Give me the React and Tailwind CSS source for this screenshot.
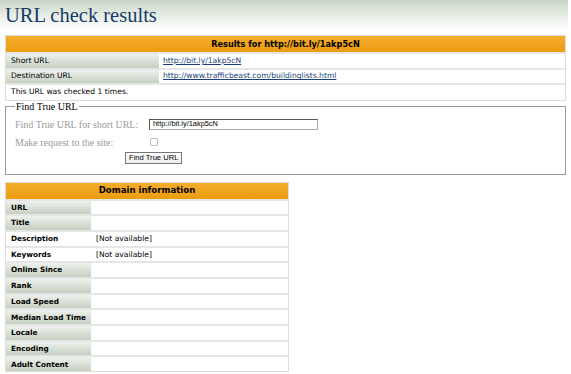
import React from "react";

const sans = { fontFamily: '"DejaVu Sans", Verdana, sans-serif' };
const serif = { fontFamily: '"Liberation Serif", Georgia, serif' };
const arial = { fontFamily: '"Liberation Sans", Arial, sans-serif' };

const labelBg = "bg-gradient-to-b from-[#eef1ec] to-[#c6d0c2]";
const orange = "bg-gradient-to-b from-[#f4ad2c] to-[#ec9c0c]";

function DomainRow({ label, value, plain }) {
  return (
    <div className="flex h-[15.7px] border-t-2 border-[#e6e6e6]">
      <div className={`w-[85px] shrink-0 pl-[5px] flex items-center font-bold text-[7.3px] ${plain ? "bg-white" : labelBg}`}>{label}</div>
      <div className="flex-1 pl-[5px] flex items-center bg-white">{value}</div>
    </div>
  );
}

export default function App() {
  const rows = [
    ["URL"], ["Title"], ["Description", "[Not available]", true], ["Keywords", "[Not available]", true],
    ["Online Since"], ["Rank"], ["Load Speed"], ["Median Load Time"], ["Locale"], ["Encoding"], ["Adult Content"],
  ];
  return (
    <div className="w-[571px] h-[374px] bg-white overflow-hidden text-black">
      <div className="h-[30px] w-[568px] bg-gradient-to-b from-[#c8d5c5] via-[#e6ede4] to-white pl-[5px] pt-[2px]">
        <div className="text-[20.5px] leading-[26px] text-[#173a6b]" style={serif}>URL check results</div>
      </div>

      <div className="px-[5px] pt-[5px]" style={sans}>
        <div className="w-[561px] border border-[#dcdcdc] text-[7.6px] leading-none">
          <div className={`h-[16px] flex items-center justify-center font-bold text-[8.2px] ${orange}`}>Results for http://bit.ly/1akp5cN</div>
          <div className="flex h-[15.5px] border-t-2 border-[#e6e6e6]">
            <div className={`w-[153px] shrink-0 pl-[5px] flex items-center ${labelBg}`}>Short URL</div>
            <div className="flex-1 pl-[4px] flex items-center"><a className="underline text-[#1a3f7a]" href="#">http://bit.ly/1akp5cN</a></div>
          </div>
          <div className="flex h-[15.5px] border-t-2 border-[#e6e6e6]">
            <div className={`w-[153px] shrink-0 pl-[5px] flex items-center ${labelBg}`}>Destination URL</div>
            <div className="flex-1 pl-[4px] flex items-center"><a className="underline text-[#1a3f7a]" href="#">http://www.trafficbeast.com/buildinglists.html</a></div>
          </div>
          <div className="h-[16.5px] border-t-2 border-[#e6e6e6] pl-[5px] flex items-center">This URL was checked 1 times.</div>
        </div>

        <fieldset className="mt-[1px] w-[561px] h-[73px] border border-[#9a9a9a] pl-[9px] pr-2 pt-0" style={serif}>
          <legend className="text-[10px] leading-[10px] px-[1px]">Find True URL</legend>
          <div className="flex items-center h-[15px] text-[10px] text-[#9a9a9a] mt-[5px]">
            <span className="w-[134px]">Find True URL for short URL:</span>
            <div className="w-[169px] h-[11px] border border-[#555] border-b-[#aaa] border-r-[#aaa] flex items-center pl-[3px] text-[7.4px] text-black" style={arial}>http://bit.ly/1akp5cN</div>
          </div>
          <div className="flex items-center h-[15px] text-[10px] text-[#9a9a9a] mt-[3px]">
            <span className="w-[135px]">Make request to the site:</span>
            <div className="w-[8px] h-[8px] border border-[#bdbdbd] rounded-[1px]"></div>
          </div>
          <div className="flex pl-[110px] mt-[2px]">
            <div className="flex items-center h-[12px] px-[3px] border border-[#777] bg-gradient-to-b from-white to-[#ececec] text-[7.6px] text-black" style={arial}>Find True URL</div>
          </div>
        </fieldset>

        <div className="mt-[7px] w-[284px] border border-[#dcdcdc] text-[7.6px] leading-none">
          <div className={`h-[16px] flex items-center justify-center font-bold text-[8.6px] ${orange}`}>Domain information</div>
          {rows.map(([l, v, p]) => <DomainRow key={l} label={l} value={v} plain={p} />)}
        </div>
      </div>
    </div>
  );
}
